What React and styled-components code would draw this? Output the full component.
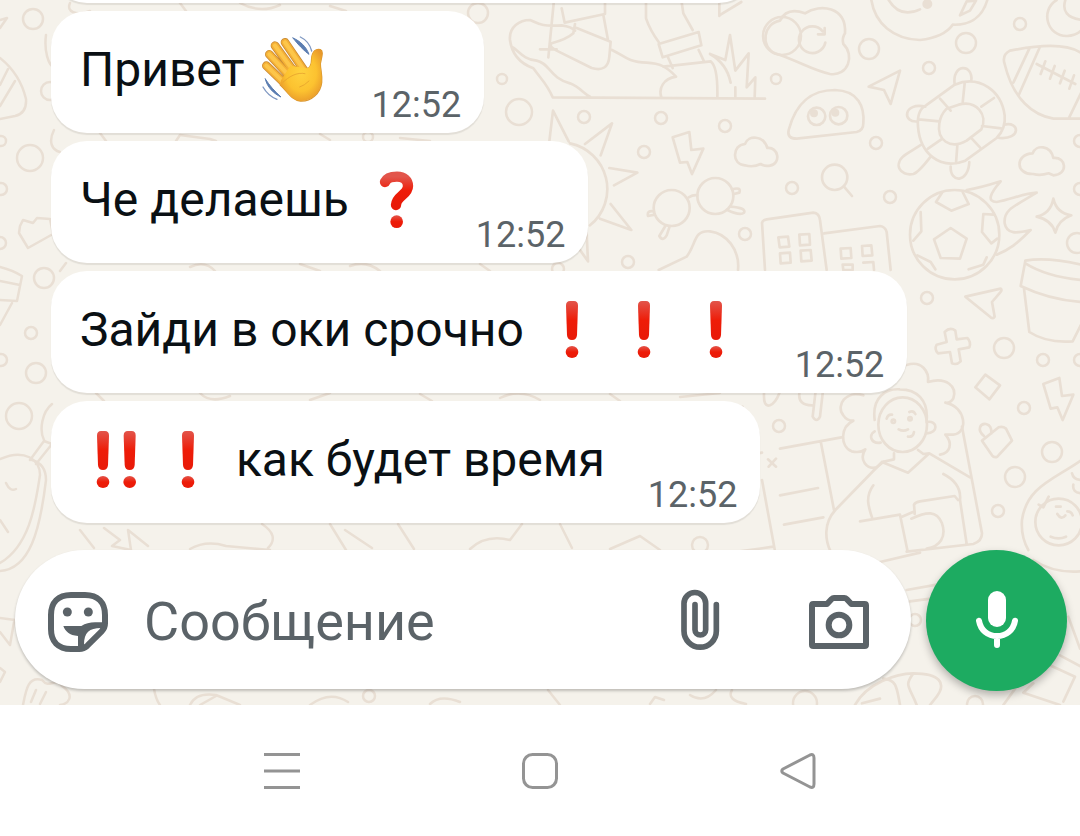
import React, { useId } from "react";
import styled, { createGlobalStyle } from "styled-components";

const colors = {
  wallpaper: "#f5f2eb",
  doodle: "#e9dfd4",
  text: "#0a1014",
  muted: "#5b6368",
  green: "#1dab61",
  nav: "#949494",
};

const messages = [
  { id: 1, parts: ["Привет ", { emoji: "wave" }], time: "12:52" },
  { id: 2, parts: ["Че делаешь ", { emoji: "question" }], time: "12:52" },
  {
    id: 3,
    parts: [
      "Зайди в оки срочно ",
      { emoji: "bang" },
      { emoji: "bang" },
      { emoji: "bang" },
    ],
    time: "12:52",
  },
  {
    id: 4,
    parts: [{ emoji: "doubleBang" }, { emoji: "bang" }, " как будет время"],
    time: "12:52",
  },
];

const App = () => {
  return (
    <React.Fragment>
      <GlobalStyle />
      <Phone>
        <Chat>
          <Wallpaper />
          <MessageList>
            <PreviousBubble aria-hidden="true" />
            {messages.map((m) => (
              <Message key={m.id} {...m} />
            ))}
          </MessageList>
          <Composer onSubmit={(e) => e.preventDefault()}>
            <InputBar>
              <IconButton type="button" aria-label="Стикеры">
                <StickerIcon />
              </IconButton>
              <MessageInput
                type="text"
                placeholder="Сообщение"
                aria-label="Сообщение"
              />
              <Actions>
                <IconButton type="button" aria-label="Прикрепить">
                  <ClipIcon />
                </IconButton>
                <IconButton type="button" aria-label="Камера">
                  <CameraIcon />
                </IconButton>
              </Actions>
            </InputBar>
            <MicButton type="button" aria-label="Голосовое сообщение">
              <MicIcon />
            </MicButton>
          </Composer>
        </Chat>
        <SystemNav>
          <NavButton type="button" aria-label="Меню">
            <svg viewBox="0 0 36 36">
              <path d="M0 1.5H36M0 18H36M0 34.500H36" />
            </svg>
          </NavButton>
          <NavButton type="button" aria-label="Домой">
            <svg viewBox="0 0 36 36">
              <rect x="1.5" y="1.5" width="33" height="33" rx="9" />
            </svg>
          </NavButton>
          <NavButton type="button" aria-label="Назад">
            <svg viewBox="0 0 36 36">
              <path d="M30 2 L3 16 Q0.5 18 3 20 L30 34 Q34 35.500 34 31 V5 Q34 0.500 30 2Z" />
            </svg>
          </NavButton>
        </SystemNav>
      </Phone>
    </React.Fragment>
  );
};

const Message = ({ parts, time }) => {
  return (
    <Bubble>
      <MessageText>
        {parts.map((part, i) =>
          part.emoji ? <Emoji key={i} name={part.emoji} /> : part
        )}
      </MessageText>
      <Time>{time}</Time>
    </Bubble>
  );
};

const labels = { wave: "👋", question: "❓", bang: "❗", doubleBang: "‼️" };

const Emoji = ({ name }) => {
  const id = useId();
  const red = `url(#${id})`;

  return (
    <EmojiSvg viewBox="0 0 216 216" role="img" aria-label={labels[name]}>
      <defs>
        <linearGradient id={id} x1="0" y1="0" x2="0" y2="1">
          <stop offset="0" stopColor="#e2554b" />
          <stop offset="0.5" stopColor="#ee1c08" />
          <stop offset="1" stopColor="#e81a08" />
        </linearGradient>
        <radialGradient id={`${id}p`} cx="0.5" cy="0.45" r="0.6">
          <stop offset="0" stopColor="#ffd23f" />
          <stop offset="0.6" stopColor="#fcc230" />
          <stop offset="1" stopColor="#e8982a" />
        </radialGradient>
      </defs>
      {name === "wave" && <Hand palm={`url(#${id}p)`} />}
      {name === "bang" && <Bang x={108} fill={red} />}
      {name === "doubleBang" && (
        <React.Fragment>
          <Bang x={69} fill={red} />
          <Bang x={149} fill={red} />
        </React.Fragment>
      )}
      {name === "question" && (
        <React.Fragment>
          <path
            d="M72 57C78 44 92 41 108 41C129 41 141 53 141 69C141 96 106 98 105 126"
            fill="none"
            stroke={red}
            strokeWidth="31"
            strokeLinecap="round"
          />
          <circle cx="107" cy="176" r="19" fill={red} />
        </React.Fragment>
      )}
    </EmojiSvg>
  );
};

const Bang = ({ x, fill }) => (
  <g fill={fill}>
    <path
      d={`M${x - 18} 38Q${x - 18} 24 ${x - 6} 24H${x + 6}Q${x + 18} 24 ${
        x + 18
      } 38L${x + 15} 126Q${x + 14} 141 ${x} 141Q${x - 14} 141 ${x - 15} 126Z`}
    />
    <ellipse cx={x} cy="177" rx="19" ry="18" />
  </g>
);

const fingers =
  "M28 98L84 152M37 64L96 128M54 38L108 112M84 28L140 110";
const palm =
  "M72 142L100 98L142 104C158 112 164 96 164 76C166 54 178 46 190 50C201 54 193 74 190 92C190 110 196 124 194 148C191 180 162 206 130 204C104 202 92 176 70 156Z";

// ладонь с линиями движения
const Hand = ({ palm: fill }) => (
  <g strokeLinecap="round" strokeLinejoin="round" fill="none">
    <path d={fingers} stroke="#c98a35" strokeWidth="26" />
    <path d={palm} stroke="#d9962f" strokeWidth="4" />
    <path d={fingers} stroke="#f4b036" strokeWidth="21" />
    <path d={fingers} stroke="#fdc64a" strokeWidth="12" />
    <path d={palm} fill={fill} />
    <path
      d="M78 148C94 132 120 116 144 122M128 162Q142 158 156 144"
      stroke="#e39c2c"
      strokeWidth="3"
      opacity="0.7"
    />
    <path
      d="M108 15C130 24 148 42 156 64C142 54 124 36 108 15ZM25 138C38 158 52 174 72 192C50 182 30 162 25 138Z"
      fill="#5b7db1"
      stroke="#5b7db1"
      strokeWidth="3"
    />
    <path
      d="M130 12C147 20 159 34 164 54M18 162C28 180 42 192 60 199"
      stroke="#7f98c2"
      strokeWidth="4"
    />
  </g>
);

const StickerIcon = () => (
  <svg width="60" height="60" viewBox="144 156 180 180">
    <path
      d="M213 165H255C294 165 315 188 315 225V250Q315 264 305 274L262 317Q251 327 238 327H213C174 327 153 304 153 267V225C153 188 174 165 213 165Z"
      fill="none"
      stroke="currentColor"
      strokeWidth="18"
    />
    <circle cx="202" cy="216" r="13.500" fill="currentColor" />
    <circle cx="265" cy="216" r="13.500" fill="currentColor" />
    <path
      d="M190 258H244Q262 247 285 247H320V262L303 264C268 264 252 278 252 314V324H234V288C208 286 196 274 190 258Z"
      fill="currentColor"
    />
  </svg>
);

const ClipIcon = () => (
  <svg width="60" height="60" viewBox="90 156 180 180">
    <path
      d="M229 194V273a48.500 48.500 0 0 1-97 0V190a32.500 32.500 0 0 1 65 0V269a16 16 0 0 1-32 0V194"
      fill="none"
      stroke="currentColor"
      strokeWidth="17"
      strokeLinecap="round"
    />
  </svg>
);

const CameraIcon = () => (
  <svg width="60" height="60" viewBox="507 156 180 180">
    <g
      fill="none"
      stroke="currentColor"
      strokeWidth="18"
      strokeLinejoin="round"
    >
      <path d="M520 192H561L575 177Q578 174 582 174H613Q617 174 620 177L634 192H674Q678 192 678 196V314Q678 318 674 318H520Q516 318 516 314V196Q516 192 520 192Z" />
      <circle cx="597" cy="255" r="31" />
    </g>
  </svg>
);

const MicIcon = () => (
  <svg width="60" height="60" viewBox="981 156 180 180">
    <rect x="1044" y="156" width="54" height="108" rx="27" fill="#fff" />
    <path
      d="M1017 245C1022 274 1044 291 1071 291C1098 291 1120 274 1125 245M1071 291V318"
      fill="none"
      stroke="#fff"
      strokeWidth="18"
      strokeLinecap="round"
    />
  </svg>
);

const rings = [
  [33, 19, 10], [30, 158, 13], [44, 278, 10], [31, 333, 6], [36, 373, 10],
  [19, 416, 13], [1, 141, 5], [1, 189, 6], [0, 243, 6], [1, 360, 6],
  [50, 91, 9], [478, 13, 10], [502, 79, 5], [519, 112, 13], [584, 117, 6],
  [661, 118, 6], [644, 152, 6], [725, 126, 6], [745, 234, 6], [628, 262, 6],
  [776, 79, 5], [869, 49, 10], [966, 43, 10], [929, 68, 6], [1020, 24, 6],
  [876, 143, 6], [792, 188, 6], [890, 197, 6], [1080, 141, 6], [1080, 189, 6],
  [1077, 243, 10], [927, 298, 6], [1004, 348, 10], [1043, 360, 6],
  [1080, 360, 6], [1024, 408, 6], [1052, 452, 10], [1015, 477, 10],
  [998, 511, 6], [779, 426, 6], [915, 620, 6], [805, 703, 12], [369, 696, 6],
  [700, 545, 8], [975, 704, 8], [558, 269, 6], [368, 137, 5], [782, 36, 19],
];

// фон с рисунками
const Wallpaper = () => (
  <WallpaperSvg
    viewBox="0 0 1080 705"
    preserveAspectRatio="xMidYMin slice"
    aria-hidden="true"
  >
    <g strokeWidth="2.500">
      {rings.map(([x, y, r], i) => (
        <circle key={i} cx={x} cy={y} r={r} />
      ))}
      {/* левый край */}
      <path d="M0 58Q20 74 26 99Q27 113 15 116L0 119M8 69L0 85M15 81L0 106M0 28L7 18L0 20" />
      <path d="M20 226L23 220L33 223L37 218L50 219L53 234L28 248L19 233Z" />
      <path d="M0 267Q12 270 22 276L17 301L0 300M0 281L20 285M12 303L0 325" />
      <path d="M0 459C25 448 40 460 40 475C36 500 31 545 0 563M32 460Q46 464 46 480C40 530 30 569 0 571M6 483Q10 492 16 489M0 520L8 532M30 460L44 441L52 444L36 464" />
      <path d="M52 404C42 412 39 430 44 440M46 35C44 50 48 66 55 68M54 130C48 142 52 150 60 152M0 618L15 620M0 632L10 645L14 622M0 668L5 672L0 682" />
      <path d="M23 705C26 690 28 676 42 680C50 690 55 676 62 686C76 696 68 704 60 705M31 702L36 690M40 704L46 692" />
      {/* просветы между сообщениями */}
      <path d="M70 3C66 12 76 16 90 11M180 3L186 11M240 3Q260 14 280 5M330 6L346 11M100 133L106 141M176 141L180 135L210 139L216 141M320 134L330 140M400 138L430 141M60 271L66 263M190 267Q205 260 215 271M300 264L320 271M350 266Q366 260 380 271M480 264L490 271M96 393L104 401M200 393Q210 404 230 396M310 400L330 393M420 394L432 401M500 398Q520 388 540 400M610 394L620 401M680 397L720 393" />
      <path d="M80 530L94 548M104 528L120 540L112 546L131 550L128 530L148 546M190 549Q206 540 226 546L270 550M262 524Q280 536 268 548M330 524L346 550M345 530L372 548M398 524L414 549M470 549Q486 534 510 540L522 524M560 524L572 548M610 549L640 536L660 550M154 689Q156 700 160 705M190 705Q196 692 216 695L240 705M200 705L216 696M310 705Q330 690 348 702M430 704Q440 694 460 702M548 690L560 705M650 704L655 697L664 700M690 695Q704 704 716 690M732 690Q726 700 746 704" />
    </g>

    <g transform="translate(480 0) scale(0.33333)">
      {/* кроссовки */}
      <path d="M218 292C200 250 185 240 160 205C120 190 95 160 90 120C86 80 120 60 150 60C175 70 180 80 245 76Q275 80 285 92M95 140C115 150 130 180 170 182C210 190 210 235 270 250C300 262 310 280 330 290M218 292L855 296M222 0L205 172M180 148H230M285 72L280 100Q260 118 215 130Q205 140 230 152L335 204Q384 218 388 170L392 125L290 84M245 25L254 68L375 42V10M370 45L384 120M396 150C430 165 440 186 500 188C540 190 560 200 588 230C550 236 535 265 544 292M498 0V55Q510 90 536 126M604 0L610 40L638 90M536 132L656 96L664 136L548 172ZM564 172L578 204M656 150L672 184M550 200L692 184Q714 200 712 292" />
      <path d="M690 162L736 180L750 105L766 212L806 160L800 262L826 232L824 292M690 162Q740 190 752 248M766 262V292M718 48V4M718 46L784 6" />
      {/* солнце */}
      <path d="M208 424L219 332L266 424M315 432L396 370L362 466M388 504L472 518L402 556M392 612L454 690L360 656M320 700L324 784L300 750M270 430A140 140 0 0 1 330 676" />
      <path d="M578 412L628 396L634 450L670 446L636 522L622 486L600 488Z" />
      <path d="M795 496C755 495 755 435 795 432C805 405 850 405 862 444C895 440 905 490 870 497Q855 500 842 492Q820 503 795 496Z" />
      <circle cx="575" cy="624" r="54" />
      <circle cx="706" cy="588" r="54" />
      <path d="M626 592Q640 584 652 586M522 634Q500 630 504 648L524 644M556 678L538 708Q548 726 560 706L568 682M756 568Q785 560 778 578L762 582M752 620Q800 624 792 638Q780 648 742 630M536 810L620 770C650 730 640 690 690 694C740 700 780 750 774 810" />
    </g>

    <g transform="translate(780 0) scale(0.33333)">
      {/* облако и чашка */}
      <path d="M0 62Q20 20 75 40C120 10 200 20 195 100Q185 115 190 132C225 165 205 230 150 222C100 212 60 185 -15 160C-60 140 -50 70 0 62M136 128A40 40 0 1 1 128 94M134 84V103H114" />
      <path d="M274 0C285 70 340 118 420 120C470 114 500 100 518 74C560 76 605 60 622 0M540 46L560 4L588 2L570 32ZM326 0Q360 56 420 28" />
      <circle cx="442" cy="12" r="11" fill={colors.doodle} />
      <path d="M830 0C780 30 800 110 862 108Q890 106 905 90M856 0Q840 50 905 60" />
      <path d="M266 260L360 212L332 312L312 270Z" />
      {/* глазастик */}
      <path d="M26 390C50 300 100 270 165 270C235 272 254 320 250 370Q250 392 230 396L50 416Q20 416 26 390Z" />
      <circle cx="110" cy="349" r="26" />
      <circle cx="176" cy="347" r="26" />
      <circle cx="102" cy="340" r="8" fill={colors.doodle} />
      <circle cx="166" cy="338" r="8" fill={colors.doodle} />
      {/* черепаха */}
      <path d="M524 254C600 222 665 275 674 346Q678 385 650 414L556 482C480 512 420 460 414 380Q410 330 438 316ZM500 326L536 314C590 300 625 345 604 388L560 422C510 450 470 420 478 370Q482 344 500 326ZM554 250L548 308M642 294L604 320M664 385L606 378M600 442L572 412M528 490L532 436M444 446L484 418M416 358L478 364M480 296L512 332M524 254C515 190 580 190 574 242M436 320C370 305 365 370 414 364M672 374C720 362 724 420 658 414M568 486C565 550 510 550 512 500M424 434L380 462C335 490 360 530 400 522Q415 518 452 470" />
      {/* мяч для регби */}
      <path d="M905 160Q850 120 690 152Q665 165 674 192C700 300 760 345 820 356L905 356M748 146L700 248M780 140L716 286M905 275L866 356M770 192L886 252M796 184L782 222M824 198L810 236M854 212L840 250M882 226L868 266" />
      <path d="M760 522C705 524 705 462 758 460C768 432 812 436 820 474C860 470 865 524 820 526L806 520Q780 528 760 522Z" />
      <circle cx="164" cy="532" r="38" />
      <path d="M192 560L216 588" />
      {/* футбольный мяч */}
      <circle cx="524" cy="704" r="134" />
      <path d="M486 578L468 606L514 632L566 612L548 576M512 684L560 716L540 776L482 774L462 718ZM422 636L424 694L400 722M640 644L610 642L606 696L634 730L652 716M412 766L452 786L466 808M620 772L610 794L566 808M560 570Q600 564 662 544C630 580 620 606 650 606C690 600 730 580 770 578C700 620 670 630 674 670C680 704 710 700 752 690C720 720 700 744 650 764" />
      <path d="M820 596Q830 640 874 646Q835 660 826 698Q815 660 770 650Q812 640 820 596Z" />
      {/* дома */}
      <path d="M-45 810L-54 668Q-52 660 -40 658L100 638Q118 640 120 660L140 810M132 700L300 678Q316 680 320 696L332 810" />
      <path d="M-5 712L24 710L28 740L-1 742ZM58 704L88 702L90 734L60 736ZM0 760L30 758L32 788L2 790ZM62 752L92 750L95 782L64 784ZM182 746L212 744L214 774L184 776ZM246 738L274 736L277 766L248 768ZM188 794H218V810H190ZM250 788L280 786L282 810" />
    </g>

    <g transform="translate(780 250) scale(0.33333)">
      <path d="M556 140L662 116Q668 120 660 128L636 156L644 200Q640 208 632 202Z" />
      <path d="M736 32L722 108Q810 150 905 156M736 32Q800 20 905 44M736 40Q800 80 905 90M732 116L748 246Q800 280 878 274L905 220" />
      <path d="M494 246Q510 230 526 242L530 268L562 264Q574 276 568 292L536 298L542 334Q530 346 516 340L510 306L474 310Q462 298 470 284L500 276Z" />
      <path d="M616 374L660 406L628 448L586 412ZM790 402L838 384L846 438L880 434L848 510L832 472L812 476Z" />
      <path d="M606 572L656 532Q668 528 678 536L696 572L652 620Q642 624 636 616ZM612 558C590 540 600 520 618 522Q636 526 634 550" />
      {/* девушка за столом */}
      <path d="M380 345C425 330 448 365 444 396C500 380 532 410 520 445Q512 460 496 458C560 470 565 550 520 554H496C520 580 510 610 480 614M250 436C200 420 165 465 190 496Q200 512 220 512C180 530 180 590 215 604Q240 610 256 598C236 630 260 660 290 652L310 636" />
      <ellipse cx="368" cy="524" rx="73" ry="82" />
      <path d="M284 510C275 440 320 415 360 418C410 418 445 450 440 510M284 544C265 555 272 582 302 578M440 516C475 510 475 550 440 550M320 506Q324 492 336 494M388 486Q400 480 406 492M356 538Q370 546 384 538M384 560Q400 562 402 546M342 610V628L306 636L166 780C130 820 135 870 152 905M306 636L384 668L448 610L430 612L414 600M448 610L570 682M546 530L606 850Q606 874 580 882L380 905M490 672Q545 700 540 750L560 882M280 706C255 740 265 770 276 802M240 814L360 794L382 900M404 788L402 764Q406 756 420 754L524 738L534 750M366 800L404 784V792M394 806C440 785 470 780 486 820C500 860 480 890 440 896" />
      <path d="M0 596L184 562M122 574L162 780M0 736L114 714M12 824L130 802M58 430Q54 466 96 466M106 430L98 500Q110 520 120 500L128 430" />
      <circle cx="340" cy="514" r="5" />
      <circle cx="390" cy="506" r="5" />
      {/* младенец */}
      <circle cx="836" cy="816" r="70" />
      <path d="M905 630C820 690 740 710 726 810Q722 860 745 900M776 764L790 772L806 740M828 770H842M832 792Q844 812 856 796M862 784Q874 784 878 796M812 860Q836 870 858 860M905 690Q880 690 876 670M905 730Q876 728 880 704" />
    </g>

    <g transform="translate(740 390) scale(0.33333)">
      <path d="M66 188L0 200M66 270L104 478M84 208L108 230M108 206L86 230M0 484L100 470M72 10Q70 52 90 46Q106 40 118 10M0 60L8 50" />
      <path d="M420 516L540 488M500 600L590 584M510 634L600 622M880 510Q940 550 1020 544M985 680L1020 776M960 796L1020 828M930 826L1005 860L970 935M880 880L850 908L960 945M850 862L790 945" />
      <path d="M345 945C380 880 470 850 520 850C600 850 620 880 590 920L570 945M430 866C470 870 470 890 480 945M520 850C490 890 510 890 530 945M366 940L420 926" />
    </g>
  </WallpaperSvg>
);

const GlobalStyle = createGlobalStyle`
  * {
    box-sizing: border-box;
  }
  body {
    margin: 0;
    font-family: Roboto, "Noto Sans", sans-serif;
    background: #fff;
  }
  button {
    padding: 0;
    border: 0;
    background: none;
    cursor: pointer;
  }
`;

const Phone = styled.div`
  display: flex;
  flex-direction: column;
  height: 100vh;
`;

const Chat = styled.main`
  position: relative;
  display: flex;
  flex: 1;
  flex-direction: column;
  min-height: 0;
  overflow: hidden;
  background: ${colors.wallpaper};
`;

const WallpaperSvg = styled.svg`
  position: absolute;
  inset: 0;
  width: 100%;
  height: 100%;
  fill: none;
  stroke: ${colors.doodle};
  stroke-width: 8;
  stroke-linecap: round;
  stroke-linejoin: round;
`;

const MessageList = styled.div`
  position: relative;
  display: flex;
  flex: 1;
  flex-direction: column;
  justify-content: flex-end;
  align-items: flex-start;
  gap: 8px;
  min-height: 0;
  padding: 0 51px 27px;
`;

const Bubble = styled.div`
  display: flex;
  flex-shrink: 0;
  align-items: flex-end;
  gap: 43px;
  max-width: 100%;
  min-height: 122px;
  padding: 0 23px 8px 29px;
  border-radius: 36px;
  background: #fff;
  box-shadow: 0 2px 1px rgba(60, 50, 40, 0.1);
`;

const PreviousBubble = styled(Bubble)`
  width: 72%;
`;

const MessageText = styled.span`
  padding: 21px 0 17px;
  color: ${colors.text};
  font-size: 48px;
  line-height: 76px;
  white-space: pre-wrap;
`;

const EmojiSvg = styled.svg`
  width: 72px;
  height: 72px;
  vertical-align: -19px;
`;

const Time = styled.time`
  color: ${colors.muted};
  font-size: 36px;
  line-height: 40px;
`;

const Composer = styled.form`
  position: relative;
  display: flex;
  align-items: flex-start;
  gap: 15px;
  padding: 0 13px 14px 15px;
`;

const InputBar = styled.div`
  display: flex;
  flex: 1;
  align-items: center;
  gap: 36px;
  min-width: 0;
  height: 139px;
  padding: 4px 42px 0 33px;
  border-radius: 70px;
  background: #fff;
  box-shadow: 0 2px 3px rgba(0, 0, 0, 0.22);
`;

const MessageInput = styled.input`
  flex: 1;
  min-width: 0;
  padding: 0;
  border: 0;
  outline: 0;
  background: none;
  color: ${colors.text};
  font-family: inherit;
  font-size: 54px;
  line-height: 64px;
  &::placeholder {
    color: ${colors.muted};
    opacity: 1;
  }
`;

const Actions = styled.div`
  display: flex;
  gap: 79px;
`;

const IconButton = styled.button`
  flex-shrink: 0;
  width: 60px;
  height: 60px;
  color: ${colors.muted};
  svg {
    display: block;
    overflow: visible;
  }
`;

const MicButton = styled.button`
  display: flex;
  flex-shrink: 0;
  align-items: center;
  justify-content: center;
  width: 141px;
  height: 141px;
  border-radius: 50%;
  background: ${colors.green};
  box-shadow: 0 4px 8px rgba(0, 0, 0, 0.28);
`;

// системная навигация
const SystemNav = styled.nav`
  display: flex;
  flex-shrink: 0;
  align-items: center;
  justify-content: center;
  gap: 222px;
  height: 131px;
  background: #fff;
`;

const NavButton = styled.button`
  width: 36px;
  height: 36px;
  svg {
    display: block;
    overflow: visible;
    fill: none;
    stroke: ${colors.nav};
    stroke-width: 3;
    stroke-linejoin: round;
  }
`;

export default App;
